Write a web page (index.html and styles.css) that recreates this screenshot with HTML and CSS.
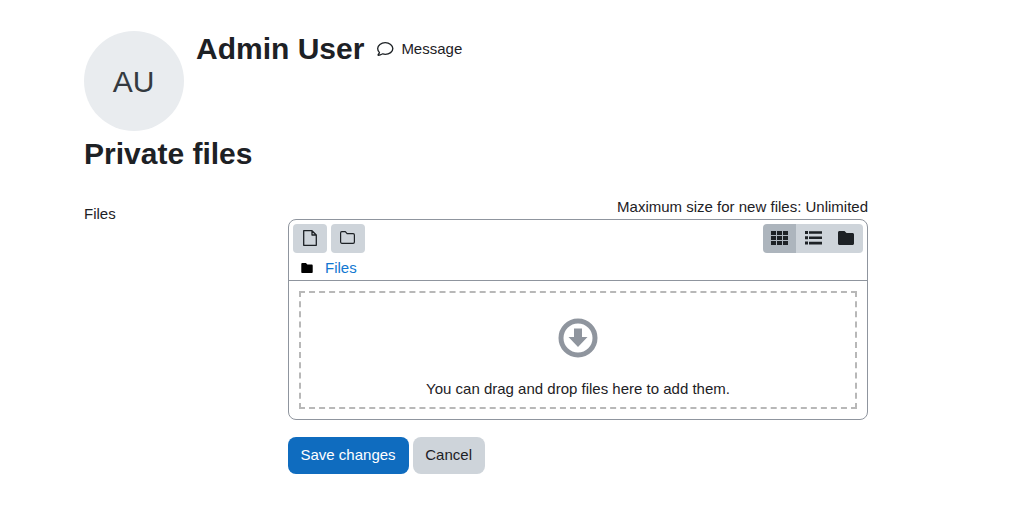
FILE: index.html
```html
<!DOCTYPE html>
<html lang="en">
<head>
<meta charset="utf-8">
<title>Private files</title>
<link rel="stylesheet" href="styles.css">
</head>
<body>
<main class="page">
  <header class="user-header">
    <div class="avatar">AU</div>
    <div class="user-name-row">
      <h1 class="user-name">Admin User</h1>
      <a class="message-link" href="#">
        <svg class="message-icon" viewBox="0 30 512 452" preserveAspectRatio="none" width="16.500" height="14" aria-hidden="true"><path fill="none" stroke="currentColor" stroke-width="42" d="M256 53C126 53 21 135 21 240c0 44 19 84 49 116 6 6 8 15 5 23-9 24-26 47-41 64-3 4-1 16 8 16 40-3 86-21 118-41 6-4 13-5 20-3 24 8 50 12 76 12 130 0 235-82 235-187S386 53 256 53z"/></svg>
        <span>Message</span>
      </a>
    </div>
  </header>
  <h2 class="page-title">Private files</h2>
  <form class="form-row">
    <div class="form-label">Files</div>
    <div class="form-field">
      <div class="max-size">Maximum size for new files: Unlimited</div>
      <div class="filemanager">
        <div class="fm-toolbar">
          <div class="fm-actions">
            <button type="button" class="fm-btn" aria-label="Add file">
              <svg class="icon-file" viewBox="0 0 14 16" width="14" height="16"><path fill="none" stroke="#1d2125" stroke-width="1.300" stroke-linejoin="round" d="M.7.7h8.300l4.300 4.300v10.300H.7zM9 .7V5h4.300"/></svg>
            </button>
            <button type="button" class="fm-btn" aria-label="Create folder">
              <svg class="icon-folder" viewBox="0 0 15 13" width="15" height="13"><path fill="none" stroke="#1d2125" stroke-width="1.200" stroke-linejoin="round" d="M1.800.6h3.500l1.800 2h6a1.300 1.300 0 0 1 1.300 1.300v7.200a1.300 1.300 0 0 1-1.300 1.300H1.800A1.300 1.300 0 0 1 .6 11.100V1.900A1.300 1.300 0 0 1 1.800.6z"/></svg>
            </button>
          </div>
          <div class="fm-views">
            <button type="button" class="fm-view is-active" aria-label="Icons">
              <svg viewBox="0 0 17 14" width="17" height="14"><path fill="#1d2125" d="M0 0h5v4H0zM6 0h5v4H6zM12 0h5v4h-5zM0 5h5v4H0zM6 5h5v4H6zM12 5h5v4h-5zM0 10h5v4H0zM6 10h5v4H6zM12 10h5v4h-5z"/></svg>
            </button>
            <button type="button" class="fm-view" aria-label="List">
              <svg viewBox="0 0 17 14" width="17" height="14"><path fill="#1d2125" d="M0 0h3v3H0zM4 .2h13v2.600H4zM0 5.300h3v3H0zM4 5.500h13v2.600H4zM0 10.600h3v3H0zM4 10.800h13v2.600H4z"/></svg>
            </button>
            <button type="button" class="fm-view" aria-label="Tree">
              <svg viewBox="0 0 512 448" width="16" height="14"><path fill="#1d2125" d="M464 64H272L208 0H48C21.500 0 0 21.500 0 48v352c0 26.500 21.500 48 48 48h416c26.500 0 48-21.500 48-48V112c0-26.500-21.500-48-48-48z"/></svg>
            </button>
          </div>
        </div>
        <div class="fm-path">
          <svg class="fm-path-icon" viewBox="0 0 512 448" width="12" height="10"><path fill="#000" d="M464 64H272L208 0H48C21.500 0 0 21.500 0 48v352c0 26.500 21.500 48 48 48h416c26.500 0 48-21.500 48-48V112c0-26.500-21.500-48-48-48z"/></svg>
          <a class="fm-path-link" href="#">Files</a>
        </div>
        <div class="fm-content">
          <div class="dropzone">
            <svg class="drop-icon" viewBox="0 0 40 40" width="40" height="40">
              <circle cx="20" cy="20" r="17" fill="none" stroke="#8f959e" stroke-width="5"/>
              <path fill="#8f959e" d="M16 10.500h8V19h5.500L20 29 10.500 19H16z"/>
            </svg>
            <div class="drop-text">You can drag and drop files here to add them.</div>
          </div>
        </div>
      </div>
      <div class="form-buttons">
        <button type="button" class="btn btn-primary">Save changes</button>
        <button type="button" class="btn btn-secondary">Cancel</button>
      </div>
    </div>
  </form>
</main>
</body>
</html>
```

FILE: styles.css
```css
* { box-sizing: border-box; }
html, body { margin: 0; padding: 0; }
body {
  background: #fff;
  color: #1d2125;
  font-family: "Liberation Sans", Arial, sans-serif;
  font-size: 15px;
  line-height: 22.5px;
  overflow: hidden;
}
.page { width: 784px; margin-left: 84px; padding-top: 31px; }
.user-header { display: flex; align-items: flex-start; }
.avatar {
  width: 100px;
  height: 100px;
  padding: 2px 1px 0 0;
  border-radius: 50%;
  background: #e9ecef;
  color: #343a40;
  font-size: 30px;
  display: flex;
  align-items: center;
  justify-content: center;
  flex: none;
}
.user-name-row { display: flex; align-items: center; margin-left: 12px; height: 36px; }
.user-name { margin: 0; font-size: 30px; line-height: 36px; font-weight: 700; }
.message-link { display: flex; align-items: center; margin-left: 13px; color: #1d2125; text-decoration: none; }
.message-icon { margin-right: 7.500px; }
.page-title { margin: 3px 0 0; font-size: 30px; line-height: 39px; font-weight: 700; }
.form-row { display: flex; margin-top: 21px; }
.form-label { width: 204px; flex: none; padding-top: 9px; }
.form-field { width: 580px; }
.max-size { text-align: right; height: 25px; line-height: 25px; }
.filemanager { border: 1px solid #8f959e; border-radius: 8px; height: 201px; display: flex; flex-direction: column; }
.fm-toolbar { display: flex; justify-content: space-between; padding: 4px; }
.fm-actions { display: flex; gap: 4px; }
.fm-btn, .fm-view {
  border: 0;
  padding: 0 0 2px;
  background: #ced4da;
  height: 29px;
  width: 33.333px;
  display: flex;
  align-items: center;
  justify-content: center;
}
.fm-btn { border-radius: 4px; width: 34px; }
.icon-file { margin-right: 1px; }
.icon-folder { margin: 0 1px 1px 0; }
.fm-views { display: flex; }
.fm-view:first-child { border-radius: 4px 0 0 4px; }
.fm-view:last-child { border-radius: 0 4px 4px 0; }
.fm-view.is-active { background: #adb5bd; }
.fm-path { display: flex; align-items: center; height: 27px; padding-left: 12px; border-bottom: 1px solid #8f959e; }
.fm-path-icon { margin-bottom: 1px; }
.fm-path-link { margin-left: 12px; color: #1177d1; text-decoration: none; }
.fm-content { flex: 1; padding: 10px; }
.dropzone {
  height: 118px;
  border: 2px dashed #b8b8b8;
  display: flex;
  flex-direction: column;
  align-items: center;
}
.drop-icon { margin-top: 25px; }
.drop-text { margin-top: 20px; }
.form-buttons { display: flex; gap: 4px; margin-top: 17px; }
.btn {
  border: 0;
  border-radius: 8px;
  height: 37px;
  padding: 0 12.500px;
  font: inherit;
}
.btn-primary { background: #0f6cbf; color: #fff; padding-right: 13.200px; }
.btn-secondary { background: #ced4da; color: #1d2125; padding-right: 13.200px; }
```
